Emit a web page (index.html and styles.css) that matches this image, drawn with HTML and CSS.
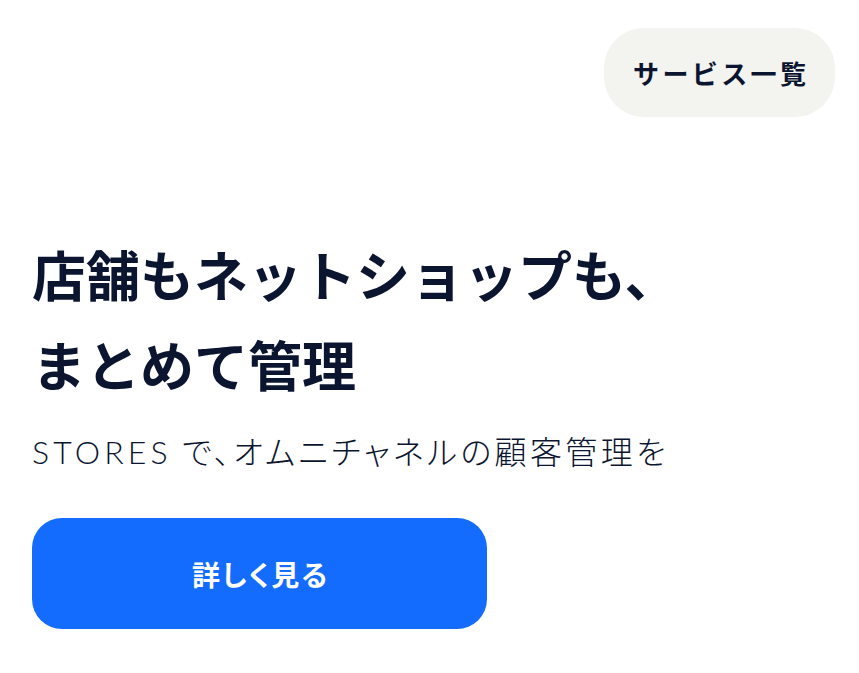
FILE: index.html
```html
<!DOCTYPE html>
<html lang="ja">
<head>
<meta charset="utf-8">
<link rel="stylesheet" href="styles.css">
</head>
<body>
<header class="top">
  <a class="services" href="#">サービス一覧</a>
</header>
<main class="hero">
  <h1 class="title">店舗もネットショップも、<br>まとめて管理</h1>
  <p class="lead"><span class="brand">STORES</span> で、オムニチャネルの顧客管理を</p>
  <a class="cta" href="#">詳しく見る</a>
</main>
</body>
</html>
```
FILE: styles.css
```css
html, body {
  margin: 0;
  padding: 0;
  background: #ffffff;
}
body {
  width: 859px;
  height: 673px;
  overflow: hidden;
  font-family: "Noto Sans CJK JP", "Noto Sans", sans-serif;
  color: #0b1530;
}
.top {
  display: flex;
  justify-content: flex-end;
  padding: 28px 24px 0 0;
}
.services {
  display: flex;
  align-items: center;
  justify-content: center;
  width: 231px;
  height: 89px;
  border-radius: 40px;
  background: #f3f3f0;
  color: #0b1530;
  font-size: 26px;
  letter-spacing: 0.13em;
  text-indent: 0.13em;
  font-weight: 700;
  text-decoration: none;
}
.hero {
  padding: 0 0 0 32px;
  display: flex;
  flex-direction: column;
  align-items: flex-start;
}
.title {
  margin: 112px 0 0 0;
  font-size: 54px;
  line-height: 90px;
  font-weight: 700;
  color: #0b1530;
}
.lead {
  margin: 19px 0 0 0;
  font-size: 32px;
  line-height: 44px;
  font-weight: 300;
  letter-spacing: 0.105em;
  font-feature-settings: "palt";
  color: #0b1530;
}
.brand {
  font-family: "Lato", "Noto Sans CJK JP", sans-serif;
  font-weight: 300;
  letter-spacing: 0.13em;
}
.cta {
  margin-top: 44px;
  display: flex;
  align-items: center;
  justify-content: center;
  width: 455px;
  height: 111px;
  border-radius: 30px;
  background: #136cfe;
  color: #ffffff;
  font-size: 28px;
  font-weight: 700;
  font-feature-settings: "palt";
  letter-spacing: 0.07em;
  text-indent: 0.07em;
  text-decoration: none;
}
```
